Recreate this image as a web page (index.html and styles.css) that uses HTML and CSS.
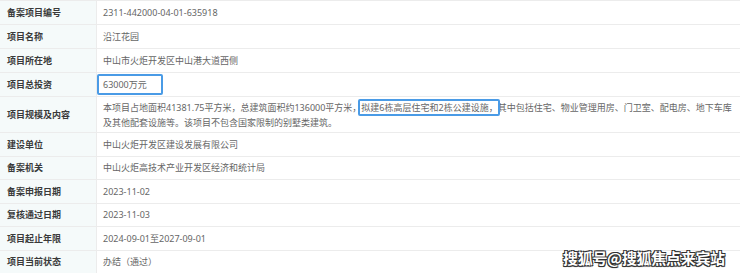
FILE: index.html
```html
<!DOCTYPE html>
<html lang="zh-CN">
<head>
<meta charset="utf-8">
<link rel="stylesheet" href="styles.css">
</head>
<body>
<div class="sheet">
  <div class="row"><div class="label">备案项目编号</div><div class="value">2311-442000-04-01-635918</div></div>
  <div class="row"><div class="label">项目名称</div><div class="value">沿江花园</div></div>
  <div class="row"><div class="label">项目所在地</div><div class="value">中山市火炬开发区中山港大道西侧</div></div>
  <div class="row"><div class="label">项目总投资</div><div class="value"><span class="mark mark-money">63000万元</span></div></div>
  <div class="row tall"><div class="label">项目规模及内容</div><div class="value multi">本项目占地面积41381.75平方米，总建筑面积约136000平方米，<span class="mark mark-inline">拟建6栋高层住宅和2栋公建设施，</span>其中包括住宅、物业管理用房、门卫室、配电房、地下车库及其他配套设施等。该项目不包含国家限制的别墅类建筑。</div></div>
  <div class="row"><div class="label">建设单位</div><div class="value">中山火炬开发区建设发展有限公司</div></div>
  <div class="row"><div class="label">备案机关</div><div class="value">中山火炬高技术产业开发区经济和统计局</div></div>
  <div class="row"><div class="label">备案申报日期</div><div class="value">2023-11-02</div></div>
  <div class="row"><div class="label">复核通过日期</div><div class="value">2023-11-03</div></div>
  <div class="row"><div class="label">项目起止年限</div><div class="value">2024-09-01至2027-09-01</div></div>
  <div class="row"><div class="label">项目当前状态</div><div class="value">办结（通过）</div></div>
  <div class="watermark">搜狐号@搜狐焦点来宾站</div>
</div>
</body>
</html>
```

FILE: styles.css
```css
* { box-sizing: border-box; }
html, body {
  margin: 0;
  padding: 0;
  background: #ffffff;
}
body {
  font-family: "Noto Sans", "Noto Sans CJK SC", sans-serif;
  font-size: 9px;
  width: 740px;
  height: 273px;
  overflow: hidden;
}
.sheet {
  position: relative;
  width: 740px;
  height: 273px;
  border-top: 1px solid #ececec;
}
.row {
  display: grid;
  grid-template-columns: 97px 1fr;
  height: 24px;
  border-bottom: 1px solid #ececec;
}
.row:nth-child(n+6) { height: 23.5px; }
.row.tall { height: 36px; }
.label {
  background: #f5fafa;
  color: #3a3a3a;
  font-weight: 700;
  padding-left: 7px;
  display: flex;
  align-items: center;
  border-right: 1px solid #ececec;
}
.value {
  color: #666666;
  padding-left: 6px;
  display: flex;
  align-items: center;
}
.value.multi {
  display: block;
  line-height: 15px;
  padding-top: 3px;
  padding-right: 2px;
}
.mark { position: relative; }
.mark::after {
  content: "";
  position: absolute;
  border: 2px solid #4a9be6;
  border-radius: 2px;
}
.mark-money::after {
  left: -6px;
  right: -16px;
  top: -4px;
  bottom: -4px;
}
.mark-inline::after {
  left: -3px;
  right: -2px;
  top: -2px;
  bottom: -2px;
}
.watermark {
  position: absolute;
  left: 563px;
  top: 247px;
  font-family: "Noto Sans CJK SC", sans-serif;
  font-size: 15px;
  font-weight: 700;
  color: #ffffff;
  line-height: 20px;
  text-shadow: 1px 1px 0 #333, -1px -1px 0 #333, 1px -1px 0 #333, -1px 1px 0 #333, 0 1px 1px #222;
  letter-spacing: -0.3px;
}
```
